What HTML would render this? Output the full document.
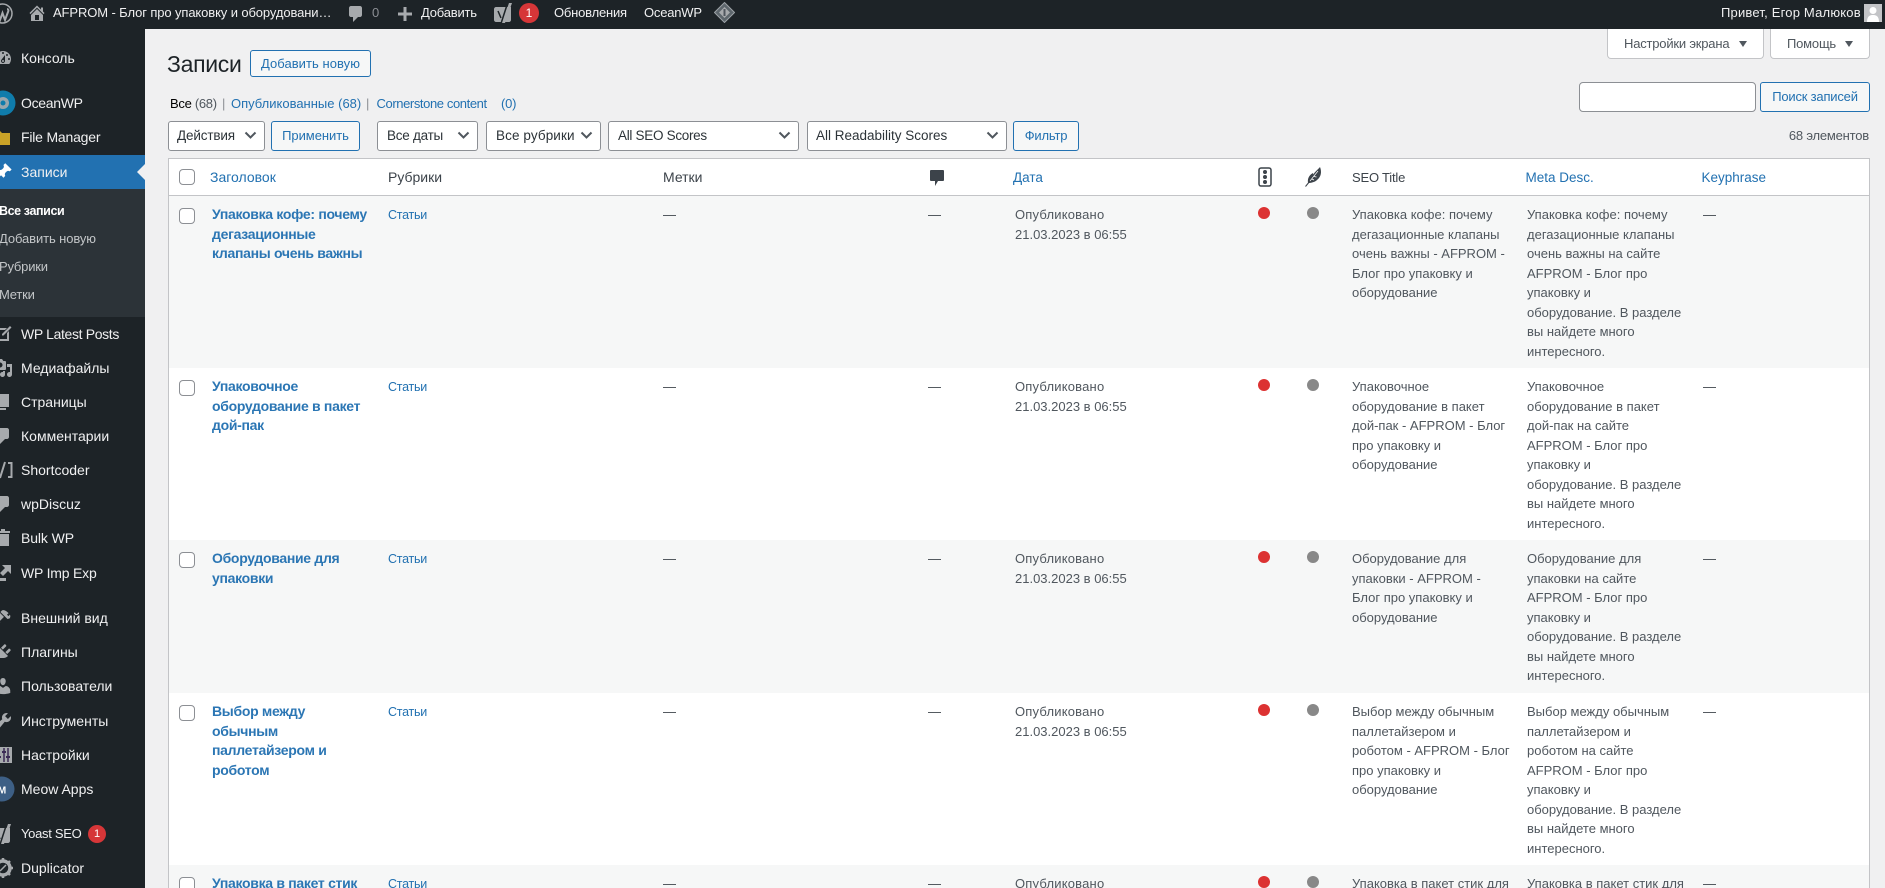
<!DOCTYPE html>
<html lang="ru"><head><meta charset="utf-8"><title>Записи</title>
<style>
html,body{margin:0;padding:0;width:1885px;height:888px;overflow:hidden;background:#f0f0f1;font-family:"Liberation Sans","DejaVu Sans",sans-serif;font-size:13px;color:#3c434a}
*{box-sizing:border-box}
.a{position:absolute}
.t{position:absolute;white-space:nowrap;line-height:20px}
a{color:#2271b1;text-decoration:none}
#bar{position:absolute;left:0;top:0;width:1885px;height:29px;background:#1d2327;color:#f0f0f1}
#bar .t{top:3px;letter-spacing:-.2px}
#side{position:absolute;left:0;top:29px;width:145px;height:859px;background:#1d2327}
.m{position:absolute;left:21px;color:#f0f0f1;font-size:14px;line-height:20px;white-space:nowrap}
.l{letter-spacing:-.3px}
.s{position:absolute;left:-1px;color:#c3c6c8;font-size:13px;line-height:20px;white-space:nowrap;letter-spacing:-.1px}
.i{position:absolute;fill:#a7aaad}
.btn{position:absolute;border:1px solid #2271b1;border-radius:3px;background:#f6f7f7;color:#2271b1;text-align:center;white-space:nowrap;letter-spacing:-.2px}
.sel{position:absolute;top:121px;height:30px;border:1px solid #8c8f94;border-radius:3px;background:#fff;color:#2c3338;line-height:27px;padding-left:8px;white-space:nowrap;letter-spacing:-.15px;font-size:13.5px}
.sel svg{position:absolute;top:8px;width:13px;height:11px}
.cb{position:absolute;width:16px;height:16px;border:1px solid #8c8f94;border-radius:4px;background:#fff}
#tbl{position:absolute;left:168px;top:158px;width:1702px;height:730px;background:#fff;border:1px solid #c3c4c7;border-bottom:0}
.th{position:absolute;top:168px;line-height:20px;white-space:nowrap;font-size:14px}
.r{position:absolute;left:169px;width:1700px}
.alt{background:#f6f7f7}
.c{position:absolute;top:9px;line-height:19.5px;white-space:nowrap;color:#50575e;font-size:13px}
.ttl{left:43px;top:9px;font-weight:bold;color:#2b76b4;letter-spacing:-.3px;font-size:14px}
.cat{left:219px;top:10px;color:#2271b1;letter-spacing:-.25px;font-size:12.5px}
.d1{left:494px;color:#3c434a}.d2{left:759px;color:#3c434a}.d3{left:1534px;color:#3c434a}
.dt{left:846px}.se{left:1183px}.me{left:1358px}
.dt span{letter-spacing:.2px}
.red,.gr{position:absolute;top:11px;width:12px;height:12px;border-radius:50%}
.red{left:1089px;background:#dc3232}.gr{left:1138px;background:#888}
.cbr{left:10px;top:12px}
</style></head><body>

<div id="side">
<div class="a" style="left:0;top:126px;width:145px;height:34px;background:#2271b1"></div>
<div class="a" style="left:0;top:160px;width:145px;height:128px;background:#2c3338"></div>
<div class="a" style="left:137px;top:135px;border:8px solid transparent;border-right-color:#f0f0f1;border-left:0"></div>

<svg class="i" style="left:-7px;top:19px" width="20" height="20" viewBox="0 0 20 20"><path d="M3.760 16h12.480c1.100-1.370 1.760-3.110 1.760-5 0-4.420-3.580-8-8-8s-8 3.580-8 8c0 1.890.66 3.630 1.760 5zM10 4c.55 0 1 .45 1 1s-.45 1-1 1-1-.45-1-1 .45-1 1-1zM6 6c.55 0 1 .45 1 1s-.45 1-1 1-1-.45-1-1 .45-1 1-1zm8 0c.55 0 1 .45 1 1s-.45 1-1 1-1-.45-1-1 .45-1 1-1zm-5.370 5.550L12 7v6c0 1.100-.9 2-2 2s-2-.9-2-2c0-.57.24-1.080.63-1.450zM4 10c.55 0 1 .45 1 1s-.45 1-1 1-1-.45-1-1 .45-1 1-1zm12 0c.55 0 1 .45 1 1s-.45 1-1 1-1-.45-1-1 .45-1 1-1zm-5 3c0-.55-.45-1-1-1s-1 .45-1 1 .45 1 1 1 1-.45 1-1z"/></svg>
<div class="m" style="top:19px">Консоль</div>

<svg style="position:absolute;left:-10px;top:61px" width="26" height="26"><circle cx="13" cy="13" r="12.500" fill="#0f7cab"/><circle cx="13" cy="13" r="6" fill="#9aa6ac"/><circle cx="13" cy="13" r="2.500" fill="#0f7cab"/></svg>
<div class="m l" style="top:64px">OceanWP</div>

<svg style="position:absolute;left:-8px;top:100px" width="20" height="16"><path d="M0 2h8l2 2h8v12H0z" fill="#c9a227"/></svg>
<div class="m" style="top:98px;letter-spacing:-.2px">File Manager</div>

<svg style="position:absolute;left:-7px;top:133px" width="20" height="20" viewBox="0 0 20 20"><path d="M10.440 3.020l1.820-1.820 6.360 6.350-1.830 1.820c-1.050-.68-2.480-.57-3.410.36l-.75.75c-.92.93-1.040 2.350-.35 3.410l-1.830 1.820-2.410-2.410-2.800 2.790c-.42.42-3.380 2.710-3.800 2.290s1.860-3.390 2.280-3.810l2.790-2.790L4.100 9.360l1.830-1.820c1.050.69 2.480.57 3.400-.36l.75-.75c.93-.92 1.050-2.350.36-3.410z" fill="#fff"/></svg>
<div class="m" style="top:133px">Записи</div>

<div class="s" style="top:172px;color:#fff;font-weight:bold;font-size:12.5px;letter-spacing:-.4px">Все записи</div>
<div class="s" style="top:200px">Добавить новую</div>
<div class="s" style="top:228px;letter-spacing:-.2px">Рубрики</div>
<div class="s" style="top:256px;letter-spacing:-.2px">Метки</div>

<svg class="i" style="left:-7px;top:295px" width="20" height="20"><path d="M3 4h11l-2 2H5v9h9V9l2-2v10H3zM9 10l8-8 1.500 1.500-8 8H9z"/></svg>
<div class="m l" style="top:295px;letter-spacing:-.35px">WP Latest Posts</div>

<svg class="i" style="left:-7px;top:329px" width="20" height="20" viewBox="0 0 20 20"><path d="M13 11V4c0-.55-.45-1-1-1h-1.670L9 1H5L3.670 3H2c-.55 0-1 .45-1 1v7c0 .55.45 1 1 1h10c.55 0 1-.45 1-1zM7 4.500c1.380 0 2.500 1.120 2.500 2.500S8.380 9.500 7 9.500 4.500 8.380 4.500 7 5.620 4.500 7 4.500zM14 6h5v10.500c0 1.380-1.120 2.500-2.500 2.500S14 17.880 14 16.500s1.120-2.500 2.500-2.500c.17 0 .34.020.5.050V9h-3V6zm-4 8.050V13h2v3.500c0 1.380-1.120 2.500-2.500 2.500S7 17.880 7 16.500 8.120 14 9.500 14c.17 0 .34.020.5.050z"/></svg>
<div class="m" style="top:329px">Медиафайлы</div>

<svg class="i" style="left:-7px;top:363px" width="20" height="20" viewBox="0 0 20 20"><path d="M6 15V2h10v13H6zm-1 1h8v2H3V5h2v11z"/></svg>
<div class="m" style="top:363px">Страницы</div>

<svg class="i" style="left:-7px;top:397px" width="20" height="20" viewBox="0 0 20 20"><path d="M5 2h9c1.100 0 2 .9 2 2v7c0 1.100-.9 2-2 2h-2l-5 5v-5H5c-1.100 0-2-.9-2-2V4c0-1.100.9-2 2-2z"/></svg>
<div class="m" style="top:397px">Комментарии</div>

<svg class="a" style="left:-7px;top:431px" width="20" height="20" fill="none" stroke="#a7aaad" stroke-width="2"><path d="M4 3H1v14h3M15 3h3.500v14H15M12 2L7 18"/></svg>
<div class="m" style="top:431px">Shortcoder</div>

<svg class="i" style="left:-7px;top:465px" width="20" height="20" viewBox="0 0 20 20"><path d="M5 2h9c1.100 0 2 .9 2 2v7c0 1.100-.9 2-2 2h-2l-5 5v-5H5c-1.100 0-2-.9-2-2V4c0-1.100.9-2 2-2z"/></svg>
<div class="m" style="top:465px">wpDiscuz</div>

<svg class="i" style="left:-7px;top:499px" width="20" height="20"><path d="M8 1h4v2h5v2H3V3h5zM4 6h12v12H4z"/></svg>
<div class="m l" style="top:499px;letter-spacing:-.1px">Bulk WP</div>

<svg class="i" style="left:-7px;top:534px" width="20" height="20"><path d="M3 8h3v7h7v3H3zM9 2h9v9l-3-3-5 5-3-3 5-5z"/></svg>
<div class="m l" style="top:534px;letter-spacing:-.2px">WP Imp Exp</div>

<svg class="i" style="left:-7px;top:579px" width="20" height="20" viewBox="0 0 20 20"><path d="M14.480 11.060L7.410 3.990l1.500-1.500c.5-.56 2.300-.47 3.590.32 1.290.8 1.760 1.200 3.080 2.360L14 6.670l1.410 1.420 1.500-1.500c.62 1.270.6 2.940-.46 3.960zM6.720 4.690L2.340 9.070l4.240 4.240 4.380-4.380zm-3 6.410l3.530 3.530-2.830 2.830-3.530-3.530z"/></svg>
<div class="m" style="top:579px">Внешний вид</div>

<svg class="i" style="left:-7px;top:613px" width="20" height="20" viewBox="0 0 20 20"><path d="M13.110 4.360L9.870 7.600 8 5.730l3.240-3.240c.35-.34 1.050-.2 1.560.32.52.51.66 1.210.31 1.550zm-8 1.770l.91-1.120 9.010 9.010-1.190.84c-.71.71-2.630 1.160-3.820 1.160H6.140L4.900 17.260c-.59.59-1.540.59-2.120 0-.59-.58-.59-1.530 0-2.120l1.240-1.240v-3.880c0-1.130.52-3.010 1.090-3.890zm7.260 3.970l3.240-3.240c.34-.35 1.040-.21 1.550.31.52.51.66 1.210.31 1.550l-3.240 3.250z"/></svg>
<div class="m" style="top:613px">Плагины</div>

<svg class="i" style="left:-7px;top:647px" width="20" height="20" viewBox="0 0 20 20"><path d="M10 9.250c-2.270 0-2.730-3.440-2.730-3.440C7 4.020 7.820 2 9.970 2c2.160 0 2.980 2.020 2.710 3.810 0 0-.41 3.440-2.680 3.440zm0 2.570L12.720 10c2.390 0 4.520 2.330 4.520 4.530v2.490s-3.650 1.130-7.240 1.130c-3.650 0-7.240-1.130-7.240-1.130v-2.490c0-2.250 1.940-4.480 4.470-4.480z"/></svg>
<div class="m" style="top:647px">Пользователи</div>

<svg class="i" style="left:-7px;top:682px" width="20" height="20" viewBox="0 0 20 20"><path d="M16.680 9.770c-1.340 1.340-3.300 1.670-4.950.99l-5.410 6.520c-.99.99-2.590.99-3.570 0-.99-.98-.99-2.580 0-3.570l6.520-5.420c-.68-1.650-.35-3.610.99-4.950 1.280-1.280 3.120-1.620 4.720-1.060l-2.890 2.890 2.820 2.820 2.860-2.870c.53 1.580.18 3.410-1.090 4.670z"/></svg>
<div class="m" style="top:682px">Инструменты</div>

<svg class="a" style="left:-7px;top:716px" width="20" height="20"><rect x="1" y="2" width="18" height="16" fill="#a7aaad"/><path d="M6 3v14M11 3v14M15 3v14" stroke="#3b2a55" stroke-width="1.500"/><path d="M4 12h4M9 7h4M13 12h4" stroke="#3b2a55" stroke-width="2"/></svg>
<div class="m" style="top:716px">Настройки</div>

<svg class="a" style="left:-11px;top:747px" width="26" height="26"><circle cx="13" cy="13" r="12.500" fill="#3d5f85"/><text x="13" y="17.500" text-anchor="middle" font-size="10" font-weight="bold" fill="#fff" font-family="Liberation Sans">M</text></svg>
<div class="m" style="top:750px">Meow Apps</div>

<svg class="a" style="left:-7px;top:795px" width="19" height="21"><path d="M2 4h15v13c0 1-1 2-2 2H2c-1 0-2-1-2-2V6c0-1 1-2 2-2z" fill="#a7aaad"/><path d="M15 0h3l-7 20H8z" fill="#a7aaad"/><path d="M4 8l3 7M13 2L7.500 19" stroke="#1d2327" stroke-width="1.500" fill="none"/></svg>
<div class="m" style="top:795px;font-size:13px;letter-spacing:-.3px">Yoast SEO</div>
<div class="a" style="left:88px;top:796px;width:18px;height:18px;border-radius:50%;background:#d63638;color:#fff;font-size:11px;line-height:18px;text-align:center">1</div>

<svg class="a" style="left:-7px;top:829px" width="20" height="20" fill="none" stroke="#a7aaad"><circle cx="10" cy="10" r="7" stroke-width="3.500"/><path d="M10 0v3M10 17v3M0 10h3M17 10h3M3 3l2 2M15 15l2 2M17 3l-2 2M3 17l2-2" stroke-width="2.500"/><path d="M7 13l6-6" stroke-width="1.500"/></svg>
<div class="m" style="top:829px">Duplicator</div>
</div>

<div id="bar">
<svg class="a" style="left:-8px;top:3px" width="21" height="21" fill="none" stroke="#a7aaad"><circle cx="10.500" cy="10.500" r="9.500" stroke-width="1.500"/><path d="M4 7l4 10 2.500-7L13 17l3-8c1-2 0-3-1-3" stroke-width="2"/></svg>
<svg class="a" style="left:27px;top:3px;fill:#a7aaad" width="20" height="20" viewBox="0 0 20 20"><path d="M16 8.500l1.530 1.530-1.060 1.060L10 4.620l-6.470 6.470-1.060-1.060L10 2.500l4 4v-2h2v4zm-6-2.460l6 5.990V18H4v-5.970zM12 17v-5H8v5h4z"/></svg>
<div class="t" style="left:53px;letter-spacing:-.11px">AFPROM - Блог про упаковку и оборудовани…</div>
<svg class="a" style="left:346px;top:4px;fill:#a7aaad" width="20" height="20" viewBox="0 0 20 20"><path d="M5 2h9c1.100 0 2 .9 2 2v7c0 1.100-.9 2-2 2h-2l-5 5v-5H5c-1.100 0-2-.9-2-2V4c0-1.100.9-2 2-2z"/></svg>
<div class="t" style="left:372px;color:#8c8f94">0</div>
<svg class="a" style="left:398px;top:7px;fill:#a7aaad" width="14" height="14"><path d="M5.500 0h3v5.500H14v3H8.500V14h-3V8.500H0v-3h5.500z"/></svg>
<div class="t" style="left:421px">Добавить</div>
<svg class="a" style="left:494px;top:3px" width="19" height="21"><path d="M2 4h15v13c0 1-1 2-2 2H2c-1 0-2-1-2-2V6c0-1 1-2 2-2z" fill="#a7aaad"/><path d="M15 0h3l-7 20H8z" fill="#a7aaad"/><path d="M4 8l3 7M13 2L7.500 19" stroke="#1d2327" stroke-width="1.500" fill="none"/></svg>
<div class="a" style="left:519px;top:3px;width:20px;height:20px;border-radius:50%;background:#d63638;color:#fff;font-size:12px;line-height:20px;text-align:center">1</div>
<div class="t" style="left:554px">Обновления</div>
<div class="t" style="left:644px">OceanWP</div>
<svg class="a" style="left:714px;top:2px" width="21" height="21"><path d="M10.500 .5l10 10-10 10-10-10z" fill="#5d666c" stroke="#9ca2a7"/><path d="M10.500 5l5.500 5.500-5.500 5.500L5 10.500z" fill="#a7aaad"/><path d="M9.500 7h2v7h-2z" fill="#50575e"/></svg>
<div class="t" style="left:1721px;letter-spacing:.2px">Привет, Егор Малюков</div>
<svg class="a" style="left:1864px;top:4px" width="18" height="18"><rect width="18" height="18" fill="#c3c4c7"/><circle cx="9" cy="6.500" r="3.500" fill="#fff"/><path d="M3 18c0-6 3-7 6-7s6 1 6 7z" fill="#fff"/></svg>
</div>

<div class="a" style="left:1607px;top:29px;width:157px;height:30px;background:#fff;border:1px solid #c3c4c7;border-top:0;border-radius:0 0 4px 4px"></div>
<div class="t" style="left:1624px;top:34px;color:#50575e;letter-spacing:-.2px">Настройки экрана</div>
<div class="a" style="left:1739px;top:41px;border:4px solid transparent;border-top:6px solid #50575e;border-bottom:0"></div>
<div class="a" style="left:1770px;top:29px;width:100px;height:30px;background:#fff;border:1px solid #c3c4c7;border-top:0;border-radius:0 0 4px 4px"></div>
<div class="t" style="left:1787px;top:34px;color:#50575e;letter-spacing:-.2px">Помощь</div>
<div class="a" style="left:1845px;top:41px;border:4px solid transparent;border-top:6px solid #50575e;border-bottom:0"></div>

<div class="t" style="left:167px;top:47px;font-size:23px;line-height:34px;color:#1d2327;letter-spacing:-.3px">Записи</div>
<div class="btn" style="left:250px;top:50px;width:121px;height:27px;line-height:25px;letter-spacing:.05px">Добавить новую</div>

<div class="t" style="left:170px;top:94px;letter-spacing:-.3px;color:#000">Все <span style="color:#50575e">(68)</span></div>
<div class="t" style="left:222px;top:94px;color:#8c8f94">|</div>
<div class="t" style="left:231px;top:94px"><a>Опубликованные</a> <span style="color:#2271b1">(68)</span></div>
<div class="t" style="left:366px;top:94px;color:#8c8f94">|</div>
<div class="t" style="left:376.500px;top:94px;letter-spacing:-.4px"><a>Cornerstone content</a></div>
<div class="t" style="left:501px;top:94px;color:#2271b1;letter-spacing:-.2px">(0)</div>

<div class="a" style="left:1579px;top:82px;width:177px;height:30px;background:#fff;border:1px solid #8c8f94;border-radius:4px"></div>
<div class="btn" style="left:1760px;top:82px;width:110px;height:30px;line-height:28px">Поиск записей</div>

<div class="sel" style="left:168px;width:97px">Действия<svg style="right:7px" viewBox="0 0 13 11" fill="none" stroke="#50575e" stroke-width="2"><path d="M1.500 2.500l5 5 5-5"/></svg></div>
<div class="btn" style="left:271px;top:121px;width:89px;height:30px;line-height:28px;letter-spacing:-.05px">Применить</div>
<div class="sel" style="left:377px;width:101px;letter-spacing:-.25px;padding-left:9px">Все даты<svg style="right:7px" viewBox="0 0 13 11" fill="none" stroke="#50575e" stroke-width="2"><path d="M1.500 2.500l5 5 5-5"/></svg></div>
<div class="sel" style="left:486px;width:115px;letter-spacing:.1px;padding-left:9px">Все рубрики<svg style="right:7px" viewBox="0 0 13 11" fill="none" stroke="#50575e" stroke-width="2"><path d="M1.500 2.500l5 5 5-5"/></svg></div>
<div class="sel" style="left:608px;width:191px;letter-spacing:-.3px;padding-left:9px">All SEO Scores<svg style="right:7px" viewBox="0 0 13 11" fill="none" stroke="#50575e" stroke-width="2"><path d="M1.500 2.500l5 5 5-5"/></svg></div>
<div class="sel" style="left:807px;width:200px;letter-spacing:0">All Readability Scores<svg style="right:7px" viewBox="0 0 13 11" fill="none" stroke="#50575e" stroke-width="2"><path d="M1.500 2.500l5 5 5-5"/></svg></div>
<div class="btn" style="left:1013px;top:121px;width:66px;height:30px;line-height:28px">Фильтр</div>
<div class="t" style="right:16px;top:126px;color:#50575e;letter-spacing:-.2px">68 элементов</div>

<div id="tbl"></div>
<div class="a" style="left:169px;top:195px;width:1700px;height:1px;background:#c3c4c7"></div>
<div class="cb" style="left:179px;top:169px"></div>
<div class="th" style="left:210px;top:167px"><a>Заголовок</a></div>
<div class="th" style="left:388px;top:167px">Рубрики</div>
<div class="th" style="left:663px;top:167px">Метки</div>
<svg class="a" style="left:930px;top:170px" width="14" height="17"><path d="M1 0h12a1 1 0 0 1 1 1v9a1 1 0 0 1-1 1H8l-3 5v-5H1a1 1 0 0 1-1-1V1a1 1 0 0 1 1-1z" fill="#3c434a"/></svg>
<div class="th" style="left:1013px;font-size:13.5px"><a>Дата</a></div>
<svg class="a" style="left:1258px;top:167px" width="14" height="20"><rect x="1" y="1" width="12" height="18" rx="2" fill="none" stroke="#3c434a" stroke-width="1.500"/><circle cx="7" cy="5" r="2" fill="#3c434a"/><circle cx="7" cy="10" r="2" fill="#3c434a"/><circle cx="7" cy="15" r="2" fill="#3c434a"/></svg>
<svg class="a" style="left:1305px;top:167px" width="17" height="20"><path d="M3 16C2 10 6 7 8 6L8.500 7.500C9.500 5 12 3.500 15 0 17 5 16 10 12 13 10 15 6 16 3 16z" fill="#3c434a"/><path d="M0.500 19.500L5 14" stroke="#3c434a" stroke-width="1"/><path d="M5 14L13 4M9 9.500L11.500 10M7 12L9 13" stroke="#fff" stroke-width=".7"/></svg>
<div class="th" style="left:1352px;font-size:13px;letter-spacing:-.2px">SEO Title</div>
<div class="th" style="left:1525.500px;font-size:13.5px"><a>Meta Desc.</a></div>
<div class="th" style="left:1701.500px;font-size:13.5px"><a>Keyphrase</a></div>

<div class="r alt" style="top:196px;height:172px">
<div class="cb cbr"></div><div class="c ttl">Упаковка кофе: почему<br>дегазационные<br>клапаны очень важны</div>
<div class="c cat">Статьи</div><div class="c d1">—</div><div class="c d2">—</div>
<div class="c dt"><span>Опубликовано</span><br>21.03.2023 в 06:55</div><div class="red"></div><div class="gr"></div>
<div class="c se">Упаковка кофе: почему<br>дегазационные клапаны<br>очень важны - AFPROM -<br>Блог про упаковку и<br>оборудование</div>
<div class="c me">Упаковка кофе: почему<br>дегазационные клапаны<br>очень важны на сайте<br>AFPROM - Блог про<br>упаковку и<br>оборудование. В разделе<br>вы найдете много<br>интересного.</div>
<div class="c d3">—</div>
</div>

<div class="r" style="top:368px;height:172px;background:#fff">
<div class="cb cbr"></div><div class="c ttl">Упаковочное<br>оборудование в пакет<br>дой-пак</div>
<div class="c cat">Статьи</div><div class="c d1">—</div><div class="c d2">—</div>
<div class="c dt"><span>Опубликовано</span><br>21.03.2023 в 06:55</div><div class="red"></div><div class="gr"></div>
<div class="c se">Упаковочное<br>оборудование в пакет<br>дой-пак - AFPROM - Блог<br>про упаковку и<br>оборудование</div>
<div class="c me">Упаковочное<br>оборудование в пакет<br>дой-пак на сайте<br>AFPROM - Блог про<br>упаковку и<br>оборудование. В разделе<br>вы найдете много<br>интересного.</div>
<div class="c d3">—</div>
</div>

<div class="r alt" style="top:540px;height:153px">
<div class="cb cbr"></div><div class="c ttl">Оборудование для<br>упаковки</div>
<div class="c cat">Статьи</div><div class="c d1">—</div><div class="c d2">—</div>
<div class="c dt"><span>Опубликовано</span><br>21.03.2023 в 06:55</div><div class="red"></div><div class="gr"></div>
<div class="c se">Оборудование для<br>упаковки - AFPROM -<br>Блог про упаковку и<br>оборудование</div>
<div class="c me">Оборудование для<br>упаковки на сайте<br>AFPROM - Блог про<br>упаковку и<br>оборудование. В разделе<br>вы найдете много<br>интересного.</div>
<div class="c d3">—</div>
</div>

<div class="r" style="top:693px;height:172px;background:#fff">
<div class="cb cbr"></div><div class="c ttl">Выбор между<br>обычным<br>паллетайзером и<br>роботом</div>
<div class="c cat">Статьи</div><div class="c d1">—</div><div class="c d2">—</div>
<div class="c dt"><span>Опубликовано</span><br>21.03.2023 в 06:55</div><div class="red"></div><div class="gr"></div>
<div class="c se">Выбор между обычным<br>паллетайзером и<br>роботом - AFPROM - Блог<br>про упаковку и<br>оборудование</div>
<div class="c me">Выбор между обычным<br>паллетайзером и<br>роботом на сайте<br>AFPROM - Блог про<br>упаковку и<br>оборудование. В разделе<br>вы найдете много<br>интересного.</div>
<div class="c d3">—</div>
</div>

<div class="r alt" style="top:865px;height:23px;overflow:hidden">
<div class="cb cbr"></div><div class="c ttl">Упаковка в пакет стик</div>
<div class="c cat">Статьи</div><div class="c d1">—</div><div class="c d2">—</div>
<div class="c dt"><span>Опубликовано</span></div><div class="red"></div><div class="gr"></div>
<div class="c se">Упаковка в пакет стик для</div>
<div class="c me">Упаковка в пакет стик для</div>
<div class="c d3">—</div>
</div>
</body></html>
